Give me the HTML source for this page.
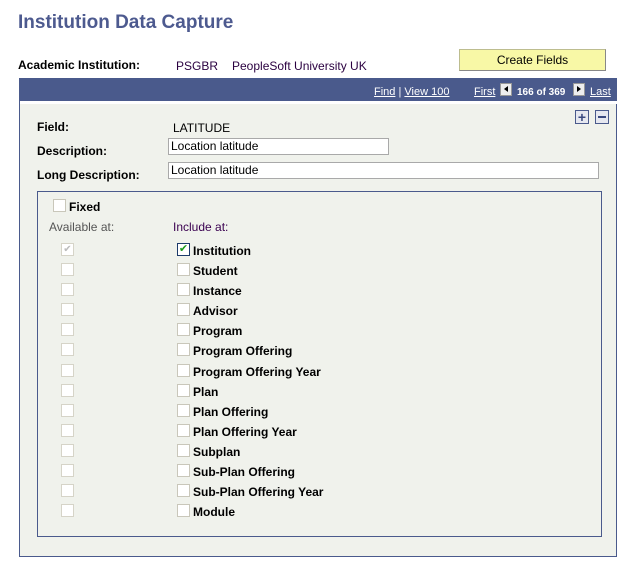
<!DOCTYPE html>
<html><head><style>
body{margin:0;width:632px;height:561px;background:#fff;font-family:Arial,"Liberation Sans",sans-serif;font-size:12px;position:relative;overflow:hidden}
.a{position:absolute;white-space:nowrap}
.b{font-weight:bold}
.cb{position:absolute;width:11px;height:11px;border:1px solid #c9c7ba;background:#fff}
.cb2{position:absolute;width:11px;height:11px;border:1px solid #d6d4c8;background:#fff}
.in{position:absolute;height:17px;border:1px solid #a9a9a9;background:#fff;box-sizing:border-box;padding-left:2px;line-height:15px}
.w a,.w u{color:#fff}
</style></head><body>
<div class="a b" style="left:18px;top:12px;font-size:19px;color:#4d5a8f">Institution Data Capture</div>
<div class="a b" style="left:18px;top:58px">Academic Institution:</div>
<div class="a" style="left:176px;top:59px;color:#2a0040">PSGBR</div>
<div class="a" style="left:232px;top:59px;color:#2a0040">PeopleSoft University UK</div>
<div class="a" style="left:459px;top:49px;width:145px;height:20px;background:#f8f8a6;border:1px solid #bdbd8f;border-right-color:#888;border-bottom-color:#888;text-align:center;line-height:20px">Create Fields</div>
<div class="a" style="left:19px;top:78px;width:596px;height:477px;border:1px solid #4a5a8c;background:#f0f2ec"></div>
<div class="a" style="left:20px;top:78px;width:597px;height:23px;background:#4a5a8c;border-bottom:3px solid #fff"></div>
<div class="a w" style="left:374px;top:86px;color:#fff;font-size:11px"><u>Find</u> | <u>View 100</u></div>
<div class="a w" style="left:474px;top:86px;color:#fff;font-size:11px"><u>First</u></div>
<div class="a" style="left:500px;top:83px;width:10px;height:11px;background:#eee;border:1px solid #999"><div style="position:absolute;left:3px;top:2px;border-right:4px solid #000;border-top:3.5px solid transparent;border-bottom:3.5px solid transparent"></div></div>
<div class="a b" style="left:517px;top:87px;color:#fff;font-size:10px">166 of 369</div>
<div class="a" style="left:573px;top:83px;width:10px;height:11px;background:#eee;border:1px solid #999"><div style="position:absolute;left:3px;top:2px;border-left:4px solid #000;border-top:3.5px solid transparent;border-bottom:3.5px solid transparent"></div></div>
<div class="a w" style="left:590px;top:86px;color:#fff;font-size:11px"><u>Last</u></div>
<div class="a" style="left:575px;top:110px;width:12px;height:12px;border:1px solid #4a5a8c;background:#e6e8f0;text-align:center;line-height:12px;font-weight:bold;color:#3a4a80;font-size:14px">+</div>
<div class="a" style="left:595px;top:110px;width:12px;height:12px;border:1px solid #4a5a8c;background:#e6e8f0"><div style="position:absolute;left:2px;top:5px;width:8px;height:2px;background:#3a4a80"></div></div>
<div class="a b" style="left:37px;top:120px">Field:</div>
<div class="a" style="left:173px;top:121px">LATITUDE</div>
<div class="a b" style="left:37px;top:144px">Description:</div>
<div class="in" style="left:168px;top:138px;width:221px">Location latitude</div>
<div class="a b" style="left:37px;top:168px">Long Description:</div>
<div class="in" style="left:168px;top:162px;width:431px">Location latitude</div>
<div class="a" style="left:37px;top:191px;width:563px;height:344px;border:1px solid #4a5a8c"></div>
<div class="cb" style="left:53px;top:199px"></div>
<div class="a b" style="left:69px;top:200px">Fixed</div>
<div class="a" style="left:49px;top:220px;color:#555">Available at:</div>
<div class="a" style="left:173px;top:220px;color:#3a0050">Include at:</div>
<div class="cb2" style="left:61px;top:243px;color:#bbb;font-size:10px;line-height:11px;text-align:center">✔</div>
<div class="cb" style="left:177px;top:243px;border-color:#1c3a6a;color:#1a9a1a;font-size:11px;line-height:11px;text-align:center">✔</div>
<div class="a b" style="left:193px;top:244px">Institution</div>
<div id="rows"></div>
<script>
var n=["Student","Instance","Advisor","Program","Program Offering","Program Offering Year","Plan","Plan Offering","Plan Offering Year","Subplan","Sub-Plan Offering","Sub-Plan Offering Year","Module"],h="";
n.forEach(function(t,i){var y=263+i*20.1;h+='<div class="cb2" style="left:61px;top:'+y+'px"></div><div class="cb" style="left:177px;top:'+y+'px"></div><div class="a b" style="left:193px;top:'+(y+1)+'px">'+t+'</div>'});
document.getElementById("rows").innerHTML=h;
</script>
</body></html>
